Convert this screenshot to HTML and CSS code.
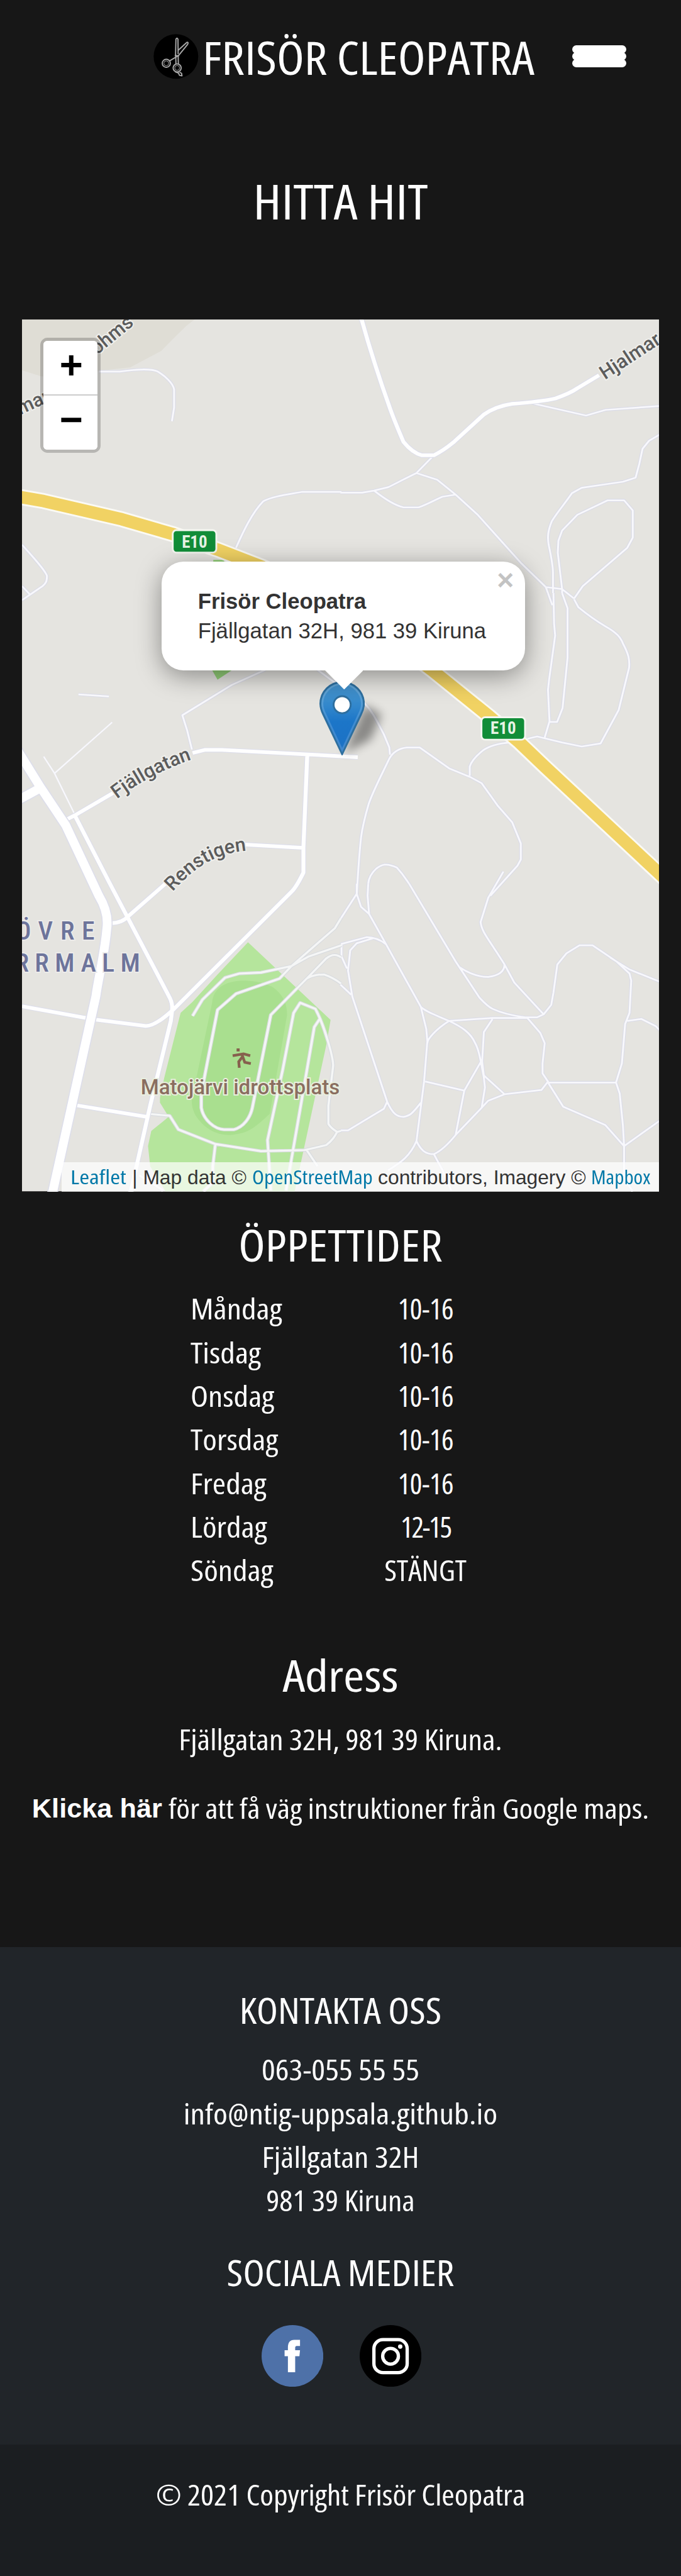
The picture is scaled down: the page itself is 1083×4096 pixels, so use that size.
FILE: index.html
```html
<!DOCTYPE html>
<html lang="sv">
<head>
<meta charset="utf-8">
<title>Frisör Cleopatra – Hitta hit</title>
<link rel="stylesheet" href="styles.css">
</head>
<body>
<header class="top">
  <svg class="logo" viewBox="42 50 224 224">
    <circle cx="154" cy="162" r="111" fill="#000"/>
    <g fill="none" stroke="#a9a9a9" stroke-width="6" stroke-linejoin="round">
      <circle cx="106" cy="196" r="20"/><circle cx="106" cy="196" r="12" stroke-width="3"/>
      <circle cx="160" cy="219" r="20"/><circle cx="160" cy="219" r="12" stroke-width="3"/>
      <path d="M152 160L154 76Q159 66 164 76L165 150"/>
      <path d="M164 132L208 92Q218 90 212 102L166 158L122 184"/>
      <path d="M148 158H170M153 160L154 200M165 158L166 200"/>
      <path d="M150 238L166 244L172 256L184 258L182 246L172 240"/>
    </g>
  </svg>
  <div class="brand">FRISÖR CLEOPATRA</div>
  <div class="burger"><span></span><span></span><span></span></div>
</header>

<main>
  <h1>HITTA HIT</h1>
  <div class="map">
    <svg class="tiles" viewBox="36 528 1053 1440">
      <defs>
        <g id="minor">
          <g transform="translate(0 500) scale(.35906 .33333)">
            <path d="M455 342H550C620 332 690 325 725 342C760 365 795 400 800 430V520L790 588M1085 1215C1120 1130 1160 1040 1210 985C1250 960 1330 950 1390 938H1570M100 1200C150 1260 210 1330 215 1355C215 1380 212 1390 195 1405L100 1475M100 1405L135 1445"/>
          </g>
          <g transform="translate(562 500) scale(.35906 .33333)">
            <path d="M430 757L350 845C300 870 250 900 220 915L155 932L100 942H0M155 932C200 970 250 1005 290 1015H360C400 1000 440 975 470 962L530 952M350 845L445 878L530 952L630 1050L830 1290L945 1410L1020 1420L1075 1467M885 500L1130 560L1220 532L1468 513M1468 655L1420 685L1390 725L1375 800L1358 868L1300 888L1110 918L1065 945C1030 1000 990 1050 972 1085C955 1130 952 1160 958 1200C970 1260 978 1300 978 1340V1440M1075 1467L1115 1405L1320 1215L1345 1165V1030L1305 980H1230L1090 1052L1020 1130L1003 1180L1000 1240L1020 1420V1440M945 1410L955 1440"/>
          </g>
          <g transform="translate(562 980) scale(.35906 .33333)">
            <path d="M955 0L975 60M980 0L983 150L988 210L960 430L955 480L962 635L940 715M1020 0L1045 75V320L1022 570L997 638H962M1075 30L1095 70C1140 110 1180 140 1220 165C1270 195 1290 220 1300 250C1325 300 1332 330 1328 370L1280 580L1197 745L1110 760L1020 740L905 710L860 722M780 740C720 745 680 760 655 780C620 810 600 840 595 860V905M110 545C150 590 170 640 200 700L225 765L228 800M75 1500C80 1400 88 1280 95 1210C100 1170 115 1100 130 1045C150 980 190 900 225 820C240 790 270 768 305 765H365L500 868L595 910L650 942L725 1055L790 1135L830 1240V1320L815 1350L690 1500"/>
            <path d="M128 1440C130 1410 145 1385 165 1365C190 1345 210 1335 260 1360C290 1395 300 1415 316 1440"/>
          </g>
          <g transform="translate(0 980) scale(.35906 .33333)">
            <path d="M360 502L500 512M1220 380L1065 455L838 605L860 680L882 775M1460 380L1560 460"/>
            <path stroke-width="7" d="M515 640L250 893M200 810L250 893L340 1090"/>
          </g>
          <g transform="translate(562 1460) scale(.35906 .33333)">
            <path d="M75 0V50L0 175M75 50L95 115L132 150L125 60L128 0M132 150L210 300L370 610C400 640 450 655 500 680C560 710 600 740 620 790C640 830 645 880 660 960L665 1010L650 1110M210 300C180 275 150 265 120 265L5 298V360L30 420M150 270L75 295L45 330L35 430L55 560L215 1080C240 1140 260 1155 290 1155C320 1150 330 1140 370 1085M0 500L50 550M215 1080L200 1115L35 1222H0M316 0L530 385L640 565C670 600 690 615 700 620C750 645 800 655 850 662H905L935 647L970 600L980 540L998 400L1040 345L1100 305H1160L1270 385L1330 445L1338 480L1330 640L1310 695L1295 890L1268 985L1285 1040L1300 1200L1305 1300V1460L1345 1524M1240 365L1330 425L1468 485M550 415C600 450 640 462 680 462C730 455 755 435 755 400M750 -60L680 70L645 190C650 240 680 270 755 400L800 490L935 647M370 610L395 720L400 780L385 980L350 1275C370 1320 390 1340 430 1340C470 1320 500 1285 530 1245L650 1110L680 1075L755 1043L925 1022L955 980L930 940V890L940 790L920 740L860 665M500 680L700 665H860M500 680C440 720 400 770 400 790M700 670L660 735L652 880L660 950L755 1043M390 980L570 1025L645 885M570 1025L530 1245M430 1340L470 1420L510 1520M350 1275C320 1350 280 1380 220 1420M955 985H1268M955 985L1025 1105L1218 1195L1305 1300L1468 1175M1320 680L1385 670L1450 705L1468 725"/>
          </g>
        </g>
        <g id="park">
          <g transform="translate(0 1460) scale(.35906 .33333)">
            <path d="M885 655L930 575L1035 465L1100 445L1200 440L1340 408L1420 360L1570 305M1340 408L1285 470L1085 545L1000 625L925 1040V1110C935 1170 985 1215 1030 1218H1075C1120 1205 1150 1160 1160 1110L1245 650L1410 470L1500 370C1530 345 1550 350 1568 365M1410 470C1440 450 1470 450 1490 450C1530 465 1550 480 1568 495M1340 408L1540 220L1568 170M1245 1520L1230 1270L1300 920L1350 640L1380 590L1450 620C1490 700 1530 850 1532 900L1510 1100V1190C1520 1210 1535 1220 1550 1230L1568 1225M1470 670L1445 710L1410 930L1315 1520M680 1140L780 1150L820 1218L990 1290L1200 1325L1400 1320L1500 1295C1530 1270 1540 1250 1550 1230M990 1290L978 1400V1480L935 1524M1410 1320L1460 1400M640 1445L750 1520"/>
          </g>
        </g>
        <g id="street">
          <g transform="translate(562 500) scale(.35906 .33333)">
            <path d="M95 74C140 250 200 440 230 530C250 590 270 640 290 690C320 730 350 750 375 757H430C480 730 500 710 525 688L660 555C700 525 740 510 790 502C850 497 930 490 990 475C1030 460 1070 440 1090 425L1190 360"/>
          </g>
          <g transform="translate(0 980) scale(.35906 .33333)">
            <path d="M885 792L940 777H1020L1430 800L1645 813M1413 795L1395 1260V1385C1370 1440 1350 1470 1340 1480L800 2060C740 2120 700 2145 670 2145L430 2112L100 2047M1110 1245L1395 1262M290 1130L345 1100L520 990M345 1105L500 1430L775 1995C800 2040 790 2070 785 2120L690 2540L600 2970M760 1440L590 1600Q560 1635 510 1635M350 2538L675 2595"/>
          </g>
        </g>
        <path id="main" d="M24 1232L66 1300L108 1363L163 1480Q180 1508 176 1535C172 1580 163 1610 158 1646L86 1972M24 1325L66 1302"/>
        <path id="e10" d="M20 819L72 828L201 858L287 883L359 908L434 937Q560 990 713 1107L807 1183L856 1225L900 1267L1110 1463"/>
        <filter id="soft" x="-50%" y="-50%" width="200%" height="200%"><feGaussianBlur stdDeviation="8"/></filter>
        <path id="fjall" d="M193 1320Q250 1276 330 1250"/>
        <path id="ren" d="M285 1473C312 1444 345 1410 410 1405"/>
        <path id="lund" d="M160 587L250 513"/>
        <path id="hjal" d="M999 628L1120 549"/>
      </defs>
      <path fill="#e5e4e0" d="M36 528h1053v1440H36z"/>
      <path fill="#dfddd5" d="M36 528H321L308 538Q285 560 266 580L215 607L163 613L68 622L36 612Z"/>
      <g transform="translate(0 1460) scale(.35906 .33333)">
        <path fill="#b5e59c" d="M1140 290L1520 675L1500 800L1355 1524H760L690 1400L680 1300L695 1225L775 1155L735 1085V1060L755 960L830 640L885 585L1000 450Z"/>
        <path fill="#a9df8f" d="M1110 480C1030 485 980 520 975 590L905 950C880 1050 870 1090 900 1150C950 1230 1010 1245 1060 1245C1140 1235 1160 1220 1240 1140L1320 650C1320 580 1290 540 1250 510C1200 485 1160 480 1110 480Z"/>
      </g>
      <path fill="#94d179" d="M352 925h18v180h16l-27 18-9-16z"/>
      <use href="#minor" class="minor-edge"/><use href="#minor" class="minor-fill"/>
      <use href="#park" class="park-edge"/><use href="#park" class="park-fill"/>
      <use href="#street" class="street-edge"/><use href="#street" class="street-fill"/>
      <use href="#main" class="main-edge"/><use href="#main" class="main-fill"/>
      <use href="#e10" class="e10-edge"/><use href="#e10" class="e10-fill"/>
      <g class="shield">
        <rect x="285" y="876" width="72" height="37" rx="6"/><text x="321" y="905">E10</text>
        <rect x="795" y="1185" width="72" height="37" rx="6"/><text x="831" y="1213">E10</text>
      </g>
      <g class="road-name">
        <text><textPath href="#lund">ohms</textPath></text>
        <text transform="translate(33 686) rotate(-25)">mar</text>
        <text><textPath href="#hjal">Hjalmar</textPath></text>
        <text><textPath href="#fjall">Fjällgatan</textPath></text>
        <text><textPath href="#ren">Renstigen</textPath></text>
      </g>
      <g class="district">
        <text x="25" y="1552" textLength="131">ÖVRE</text>
        <text x="24" y="1605" textLength="207">RRMALM</text>
      </g>
      <g fill="none" stroke="#86604d" stroke-width="4">
        <path d="M384 1744L402 1741L413 1744M399 1741L404 1755L414 1757M400 1746L394 1754L395 1764" stroke-width="4.5"/>
        <rect x="390.500" y="1732" width="5" height="5" fill="#86604d" stroke="none"/>
      </g>
      <text class="place" x="232" y="1808" textLength="329" lengthAdjust="spacingAndGlyphs">Matojärvi idrottsplats</text>
      <path d="M568 1245L602 1165L630 1180L612 1222Z" fill="#000" opacity=".4" filter="url(#soft)"/>
    </svg>

    <div class="zoomer"><span>+</span><span>−</span></div>

    <svg class="pin" viewBox="0 0 25 41">
      <defs><linearGradient id="blue" x2="0" y2="1"><stop stop-color="#4490c9"/><stop offset=".25" stop-color="#3a8dcd"/><stop offset=".55" stop-color="#1c76c8"/><stop offset="1" stop-color="#1c70c4"/></linearGradient></defs>
      <path fill="url(#blue)" stroke="#2e6f9f" d="M12.500.5C5.900.5.5 5.900.5 12.500c0 2.400.6 3.900 1.600 5.900L12.500 40.200 22.900 18.400c1-2 1.600-3.500 1.600-5.900C24.500 5.900 19.100.5 12.500.5z"/>
      <path fill="none" stroke="#fff" stroke-opacity=".16" d="M12.500 1.600C6.500 1.600 1.600 6.500 1.600 12.500c0 2.200.5 3.500 1.500 5.400L12.500 38 21.900 17.900c1-1.900 1.500-3.200 1.500-5.400C23.400 6.500 18.500 1.600 12.500 1.600z"/>
      <circle cx="12.500" cy="13" r="4.700" fill="#fff" stroke="#2e6f9f"/>
    </svg>

    <div class="popup">
      <b>Frisör Cleopatra</b><br>Fjällgatan 32H, 981 39 Kiruna
      <span class="close">×</span>
      <svg class="tip" viewBox="0 0 21 10.500"><path fill="#fff" d="M0 0H21L10.500 10.500Z"/></svg>
    </div>

    <div class="credit"><a class="c1">Leaflet</a> | Map data © <a class="c2">OpenStreetMap</a> contributors, Imagery © <a class="c3">Mapbox</a></div>
  </div>

  <h2 class="open">ÖPPETTIDER</h2>
  <div class="hours">
    <span class="d">Måndag</span><span class="t">10-16</span>
    <span class="d">Tisdag</span><span class="t">10-16</span>
    <span class="d">Onsdag</span><span class="t">10-16</span>
    <span class="d">Torsdag</span><span class="t">10-16</span>
    <span class="d">Fredag</span><span class="t">10-16</span>
    <span class="d">Lördag</span><span class="t tight">12-15</span>
    <span class="d">Söndag</span><span class="t wide">STÄNGT</span>
  </div>

  <h2 class="address-title">Adress</h2>
  <p class="address">Fjällgatan 32H, 981 39 Kiruna.</p>
  <p class="directions"><b>Klicka här</b><span>för att få väg instruktioner från Google maps.</span></p>
</main>

<footer>
  <h3>KONTAKTA OSS</h3>
  <p class="line">063-055 55 55</p>
  <p class="line mail">info@ntig-uppsala.github.io</p>
  <p class="line">Fjällgatan 32H</p>
  <p class="line zip">981 39 Kiruna</p>
  <h3 class="social-title">SOCIALA MEDIER</h3>
  <div class="social">
    <svg viewBox="0 0 102 102"><circle cx="51" cy="51" r="51" fill="#4e71a8"/><path fill="#fff" d="M43.500 78V51.500H38V41.500H43.500V37Q43.500 24.500 54 24.500H63.500V34.500H58Q55.500 34.500 55.500 37.500V41.500H63.500L62.500 51.500H55.500V78Z"/></svg>
    <svg viewBox="0 0 102 102"><circle cx="51" cy="51" r="51"/><g fill="none" stroke="#fff" stroke-width="5.500"><rect x="23.500" y="24" width="55" height="54.500" rx="15"/><circle cx="51" cy="51.500" r="13"/></g><circle cx="67" cy="35.500" r="3.600" fill="#fff"/></svg>
  </div>
  <div class="copyright"><p>© 2021 Copyright Frisör Cleopatra</p></div>
</footer>
</body>
</html>
```
FILE: styles.css
```css
* { box-sizing: border-box; margin: 0; padding: 0; }

body {
  zoom: 2.888;
  width: 375px;
  background: #171717;
  color: #fff;
  font: 400 16px/24px "Open Sans", sans-serif;
  font-stretch: 75%;
}
h1, h2, h3, p { font-weight: 400; text-align: center; }

.top { display: flex; height: 94.4px; padding: 16.7px 30px 0 84.6px; }
.logo { width: 24.8px; height: 24.8px; margin-top: 2.1px; flex: none; }
.brand { margin-left: 2px; font-size: 25.2px; line-height: 30px; white-space: nowrap; transform: scaleX(1.106); transform-origin: 0 0; }
.burger { width: 30px; margin: 8.3px 0 0 auto; }
.burger span { display: block; height: 4.6px; border-radius: 2.3px; background: #fff; }
.burger span + span { margin-top: -.8px; }

h1 { font-size: 26.75px; line-height: 32px; transform: scaleX(1.104); }

.map { position: relative; margin: 49.6px 12px 0; height: 480px; overflow: hidden; font: 12px/16px "Liberation Sans", Arial, sans-serif; color: #333; }
.tiles { display: block; width: 351px; height: 480px; }
.tiles use { fill: none; stroke-linejoin: round; }
.minor-edge { stroke: #dadbe7; stroke-width: 15; }
.minor-fill { stroke: #f8f8fc; stroke-width: 8.5; }
.park-edge { stroke: #d8dbdf; stroke-width: 17; }
.park-fill { stroke: #f5f6f6; stroke-width: 10; }
.street-edge { stroke: #dddeea; stroke-width: 25; }
.street-fill { stroke: #fff; stroke-width: 18; }
.main-edge { stroke: #dddeea; stroke-width: 18; }
.main-fill { stroke: #fff; stroke-width: 14.500; }
.e10-edge { stroke: #fbfaf4; stroke-width: 26.5; }
.e10-fill { stroke: #f1d263; stroke-width: 20.5; }
.shield rect { fill: #118d38; stroke: #f4f6f0; stroke-width: 3; }
.shield text { fill: #e6f3e4; font: 700 28px Roboto, sans-serif; font-stretch: 80%; text-anchor: middle; }
.road-name { fill: #5c5c5c; stroke: #efefec; stroke-width: 4; paint-order: stroke; font: 500 32px Roboto, sans-serif; }
.district { fill: #6d749b; stroke: #ecebea; stroke-width: 4; paint-order: stroke; font: 500 43px Roboto, sans-serif; font-stretch: 75%; }
.place { fill: #8a6e60; stroke: #e9efdf; stroke-width: 4; paint-order: stroke; font: 500 34.500px Roboto, sans-serif; }

.zoomer { position: absolute; left: 10px; top: 10px; border: 2px solid rgba(0, 0, 0, .2); border-radius: 4px; background-clip: padding-box; }
.zoomer span { display: block; width: 30px; height: 30px; line-height: 30px; text-indent: 1px; text-align: center; background: #fff; color: #000; font-family: "Liberation Mono", monospace; font-size: 22px; font-weight: 700; }
.zoomer span:first-child { border-bottom: 1px solid #ccc; border-radius: 2px 2px 0 0; }
.zoomer span:last-child { border-radius: 0 0 2px 2px; }

.pin { position: absolute; left: 164px; top: 199px; width: 25px; height: 41px; }
.popup { position: absolute; left: 77px; top: 133.2px; width: 200.2px; height: 60px; padding: 14px 20px; border-radius: 12px; background: #fff; box-shadow: 0 3px 14px rgba(0, 0, 0, .4); white-space: nowrap; }
.close { position: absolute; right: 6.200px; top: 1px; font: 700 16px/18px "Liberation Sans", sans-serif; color: #c3c3c3; }
.tip { position: absolute; left: 89.900px; top: 59.900px; width: 21px; height: 10.500px; }

.credit { position: absolute; right: 0; bottom: 0; width: 329px; height: 16px; padding-right: 4.700px; text-align: right; white-space: nowrap; background: rgba(255, 255, 255, .7); font-size: 11px; line-height: 16px; }
.credit a { display: inline-block; color: #0078a8; font-family: "Open Sans", sans-serif; font-stretch: 75%; text-align: left; transform-origin: 0 0; }
.c1 { width: 31px; transform: scaleX(1.21); }
.c2 { width: 66.300px; transform: scaleX(1.1); }
.c3 { width: 32.700px; transform: scaleX(1.045); }

.open { margin-top: 15px; font-size: 24.1px; line-height: 28.9px; transform: scaleX(1.12); }
.hours { display: grid; grid-template-columns: 99.6px 60px; margin: 8.7px 0 0 104.8px; }
.d { transform: scaleX(1.115); transform-origin: 0 0; }
.t { text-align: center; letter-spacing: -.2px; }
.tight { letter-spacing: -.8px; }
.wide { letter-spacing: 0; transform: scaleX(1.045); }

.address-title { margin-top: 31.4px; font-size: 24.1px; line-height: 28.9px; transform: scaleX(1.158); }
.address { margin-top: 8.8px; transform: scaleX(1.085); }
.directions { display: flex; justify-content: center; gap: 3.4px; margin-top: 14.2px; font-size: 15px; white-space: nowrap; }
.directions b { font-family: "Liberation Sans", Arial, sans-serif; }
.directions span { width: 264.700px; text-align: left; transform: scaleX(1.145); transform-origin: 0 0; }

footer { margin-top: 64.1px; padding-top: 23.4px; background: #212529; }
h3 { margin-bottom: 8.8px; font-size: 19.5px; line-height: 23.4px; transform: scaleX(1.104); }
.line { transform: scaleX(1.11); }
.mail { transform: scaleX(1.128); }
.zip { transform: scaleX(1.077); }
.social-title { margin: 15.9px 0 0; transform: scaleX(1.116); }
.social { display: flex; justify-content: center; gap: 20px; padding: 17.1px 0 31.8px 1px; }
.social svg { width: 34px; height: 34px; }
.copyright { height: 72.6px; padding-top: 15.8px; background: #1b1e21; }
.copyright p { transform: scaleX(1.072); }
```
